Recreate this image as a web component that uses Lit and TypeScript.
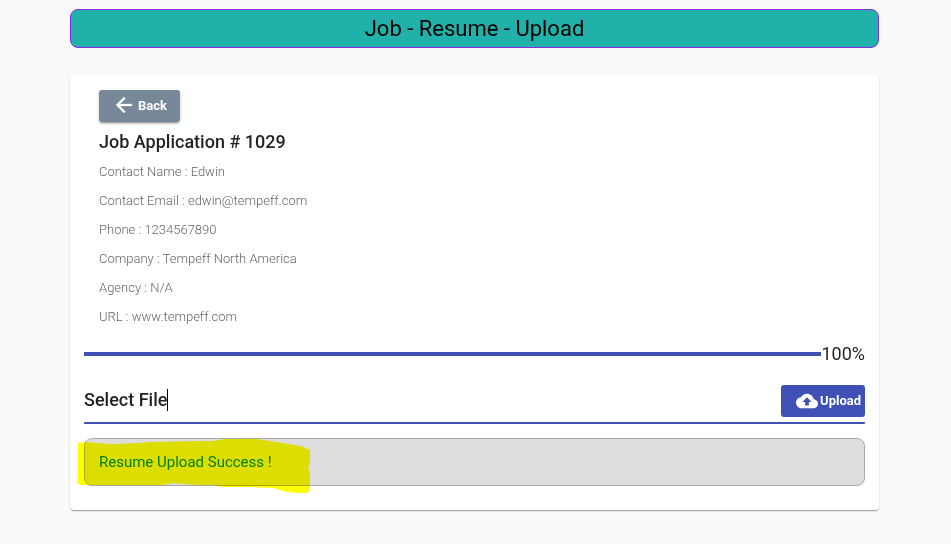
import { LitElement, html, css } from "lit";
import { customElement, state } from "lit/decorators.js";

@customElement("app-root")
export class AppRoot extends LitElement {
  static styles = css`
    :host {
      display: block;
      box-sizing: border-box;
      min-height: 100vh;
      padding: 9px 72px 32px 70px;
      background: #fafafa;
      color: rgba(0, 0, 0, 0.87);
      font-family: Roboto, "Liberation Sans", sans-serif;
    }
    * {
      box-sizing: border-box;
    }
    .banner {
      margin: 0 0 27px;
      border: 1px solid blueviolet;
      border-radius: 8px;
      background: lightseagreen;
      color: #000;
      font-size: 22px;
      font-weight: 400;
      line-height: 37px;
      text-align: center;
    }
    .card {
      padding: 15px 14px 24px;
      border-radius: 4px;
      background: #fff;
      box-shadow: 0 2px 1px -1px rgba(0, 0, 0, 0.2),
        0 1px 1px 0 rgba(0, 0, 0, 0.14), 0 1px 3px 0 rgba(0, 0, 0, 0.12);
    }
    .details {
      padding: 0 15px;
    }
    .button {
      display: flex;
      align-items: center;
      height: 32px;
      border: 0;
      border-radius: 3px;
      color: #fff;
      font: 700 13px/32px Roboto, "Liberation Sans", sans-serif;
      white-space: nowrap;
    }
    .back {
      gap: 4px;
      padding: 0 13px 0 15px;
      background: lightslategray;
      box-shadow: 0 3px 1px -2px rgba(0, 0, 0, 0.2),
        0 2px 2px 0 rgba(0, 0, 0, 0.14), 0 1px 5px 0 rgba(0, 0, 0, 0.12);
    }
    .upload {
      gap: 2px;
      padding: 0 4px 0 15px;
      background: #3f51b5;
    }
    .icon {
      display: block;
      flex: none;
      fill: currentColor;
    }
    .title {
      margin: 6px 0 1px;
      font-size: 18px;
      font-weight: 500;
      line-height: 28px;
    }
    .facts {
      margin: 0;
      padding: 0;
      list-style: none;
      color: rgba(0, 0, 0, 0.64);
      font-size: 13px;
      font-weight: 300;
      line-height: 29px;
    }
    .progress {
      display: flex;
      align-items: center;
      margin-top: 9px;
      font-size: 18px;
      line-height: 28px;
    }
    .track {
      flex: 1;
      height: 4px;
      background: #c5cae9;
    }
    .bar {
      height: 100%;
      background: #3f51b5;
    }
    .field {
      display: flex;
      align-items: center;
      justify-content: space-between;
      margin-top: 17px;
      padding-bottom: 5px;
      border-bottom: 2px solid #3f51b5;
      border-radius: 1px;
    }
    .entry {
      display: flex;
      align-items: center;
      padding-bottom: 2px;
    }
    .file {
      field-sizing: content;
      padding: 0;
      border: 0;
      outline: 0;
      background: none;
      color: inherit;
      font: 500 18px/28px Roboto, "Liberation Sans", sans-serif;
    }
    .caret {
      width: 1px;
      height: 22px;
      background: #000;
    }
    .result {
      position: relative;
      margin-top: 14px;
      padding: 0 14px;
      border: 1px solid darkgray;
      border-radius: 8px;
      background: #ddd;
      color: green;
      font-size: 15px;
      line-height: 46px;
    }
    .marker {
      position: absolute;
      top: -9px;
      left: -15px;
      fill: #ff0;
      mix-blend-mode: multiply;
      pointer-events: none;
    }
  `;

  @state() private percent = 100;
  @state() private fileName = "Select File";

  private facts = [
    ["Contact Name", "Edwin"],
    ["Contact Email", "edwin@tempeff.com"],
    ["Phone", "1234567890"],
    ["Company", "Tempeff North America"],
    ["Agency", "N/A"],
    ["URL", "www.tempeff.com"],
  ];

  render() {
    return html`
      <h1 class="banner">Job - Resume - Upload</h1>
      <main class="card">
        <section class="details">
          <button class="button back" type="button">
            <svg class="icon" width="20" height="24" viewBox="2 1 20 24" aria-hidden="true">
              <path d="M20 11H7.83l5.59-5.59L12 4l-8 8 8 8 1.41-1.41L7.83 13H20v-2z" stroke="currentColor" stroke-width=".3" />
            </svg>
            <span>Back</span>
          </button>
          <h2 class="title">Job Application # 1029</h2>
          <ul class="facts">
            ${this.facts.map(([name, value]) => html`<li>${name} : ${value}</li>`)}
          </ul>
        </section>
        <div class="progress">
          <div class="track" role="progressbar" aria-label="Upload progress" aria-valuenow=${this.percent}>
            <div class="bar" style="width:${this.percent}%"></div>
          </div>
          <span>${this.percent}%</span>
        </div>
        <div class="field">
          <div class="entry">
            <input class="file" type="text" aria-label="Select File" .value=${this.fileName} />
            <span class="caret"></span>
          </div>
          <button class="button upload" type="button">
            <svg class="icon" width="22" height="22" viewBox="0 0 24 24" aria-hidden="true">
              <path d="M19.35 10.04C18.67 6.59 15.64 4 12 4 9.11 4 6.6 5.64 5.35 8.04 2.34 8.36 0 10.91 0 14c0 3.31 2.69 6 6 6h13c2.76 0 5-2.24 5-5 0-2.64-2.05-4.78-4.65-4.96zM14 13v4h-4v-4H7l5-5 5 5h-3z" />
            </svg>
            <span>Upload</span>
          </button>
        </div>
        <div class="result" role="status">
          Resume Upload Success !
          <svg class="marker" width="250" height="66" viewBox="0 0 250 66" aria-hidden="true">
            <path d="M8 13L17 12L26 13L42 14L70 13L80 12L130 11L143 11L155 9L187 9L207 12L230 16L238 19L240 21V33L238 37L240 42V60L237 63H227L213 61L204 58L180 57L150 57L145 55L130 55L113 54L103 53L94 55H11L7 53L8 40Z" />
          </svg>
        </div>
      </main>
    `;
  }
}
